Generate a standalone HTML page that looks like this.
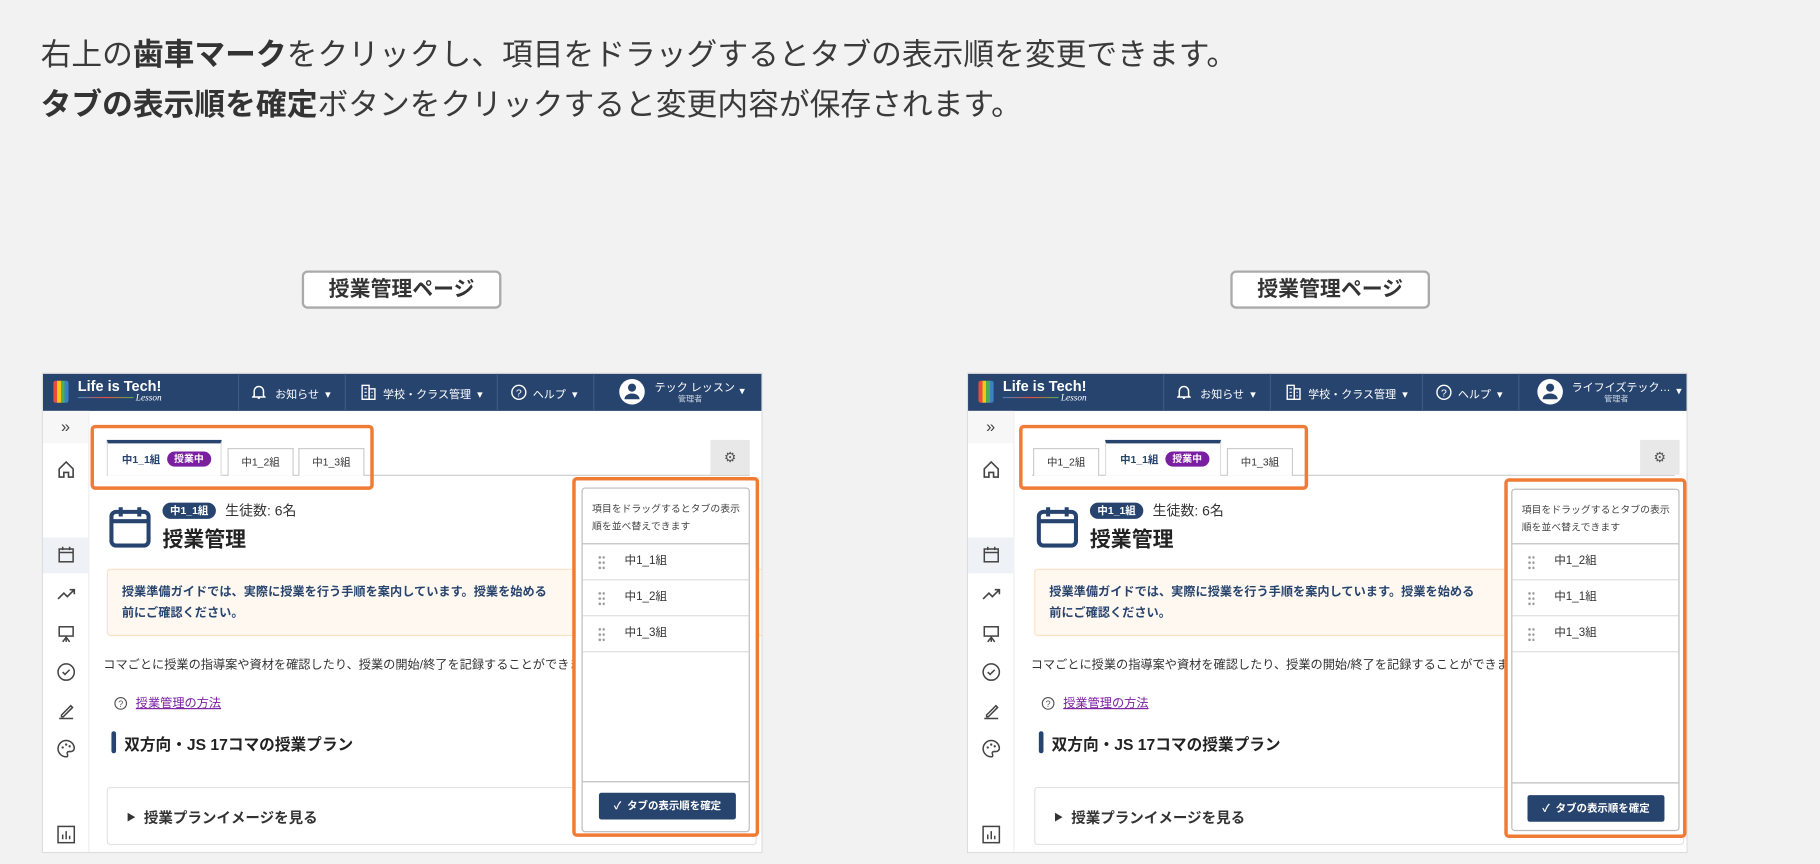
<!DOCTYPE html>
<html><head><meta charset="utf-8"><style>
*{box-sizing:border-box;margin:0;padding:0}
body{width:1820px;height:864px;overflow:hidden;background:#f2f2f2;font-family:"Liberation Sans","Noto Sans CJK JP",sans-serif;color:#333}
#w{position:absolute;left:0;top:0;width:1568px;height:744px;transform:scale(1.16071);transform-origin:0 0}
.a{position:absolute}
.intro{left:35px;font-size:26.5px;color:#3a3a3a;white-space:nowrap;line-height:32px}
.intro b{font-weight:700;color:#333}
.lbl{width:172px;height:33px;border:2px solid #aaa;border-radius:5px;background:#fff;font-size:18px;font-weight:700;text-align:center;line-height:29px;color:#333}
.fr{width:621px;height:414px;background:#fff;border:1px solid #ddd;overflow:hidden}
.hd{left:0;top:0;width:621px;height:32px;background:#27446f;color:#fff}
.hd .sep{top:0;width:1px;height:32px;background:#3d5a85}
.hd .t{font-size:9.5px;top:10px;white-space:nowrap}
.sb{left:0;top:32px;width:40px;height:382px;border-right:1px solid #eee}
.ic{left:11px;width:18px;height:18px}
.tabline{left:55px;top:87px;width:554px;height:1px;background:#ccc}
.tab{height:24px;top:64px;border:1px solid #ccc;border-bottom:none;background:#fff;font-size:9px;text-align:center;line-height:23px;color:#333}
.atab{top:57px;height:31px;border-top:3px solid #27446f;background:#fff;font-size:9px;font-weight:700;color:#27446f;line-height:28px;white-space:nowrap}
.pill{display:inline-block;background:#7b1fa2;color:#fff;border-radius:8px;font-size:8.5px;padding:0 6px;line-height:13px;margin-left:6px;vertical-align:1px}
.ob{border:3px solid #f07b35;border-radius:4px}
.row{left:0;width:143px;height:31px;border-bottom:1px solid #ddd;font-size:10px;line-height:30px;padding-left:36px;color:#333}
.dots{position:absolute;left:13px;top:9px;width:6px;height:13px;background-image:radial-gradient(circle,#999 1px,transparent 1.3px);background-size:3.5px 4.5px}
</style></head><body><div id="w">
<div class="a intro" style="top:31px">右上の<b>歯車マーク</b>をクリックし、項目をドラッグするとタブの表示順を変更できます。</div>
<div class="a intro" style="top:74px"><b>タブの表示順を確定</b>ボタンをクリックすると変更内容が保存されます。</div>
<div class="a lbl" style="left:260px;top:233px">授業管理ページ</div>
<div class="a lbl" style="left:1060px;top:233px">授業管理ページ</div>

<div class="a fr" style="left:36px;top:321px">
 <div class="a hd">
  <div class="a" style="left:9px;top:6px;width:13px;height:19px;background:linear-gradient(90deg,#e94b3c 0 25%,#f5c518 25% 50%,#4caf50 50% 75%,#3b82c4 75%);border-radius:2px"></div>
  <div class="a" style="left:30px;top:4px;font-size:12.5px;font-weight:700;white-space:nowrap">Life is Tech!</div>
  <div class="a" style="left:30px;top:20px;width:48px;height:1px;background:linear-gradient(90deg,#3b82c4,#e94b3c,#4caf50)"></div>
  <div class="a" style="left:80px;top:16px;font-size:8px;font-style:italic;font-family:'Liberation Serif',serif">Lesson</div>
  <div class="a sep" style="left:168px"></div><div class="a sep" style="left:260px"></div><div class="a sep" style="left:391px"></div><div class="a sep" style="left:474px"></div>
  <svg class="a" style="left:180px;top:9px" width="12" height="14" viewBox="0 0 12 14"><path d="M2 10V6a4 4 0 0 1 8 0v4l1 1H1z M5 12h2" fill="none" stroke="#fff" stroke-width="1.3"/></svg>
  <div class="a t" style="left:200px">お知らせ&nbsp;&nbsp;▾</div>
  <svg class="a" style="left:274px;top:9px" width="13" height="14" viewBox="0 0 13 14"><rect x="1" y="1" width="6" height="12" fill="none" stroke="#fff" stroke-width="1.2"/><rect x="7" y="4" width="5" height="9" fill="none" stroke="#fff" stroke-width="1.2"/><path d="M3 4h2M3 7h2M3 10h2M9 7h1M9 10h1" stroke="#fff"/></svg>
  <div class="a t" style="left:293px">学校・クラス管理&nbsp;&nbsp;▾</div>
  <svg class="a" style="left:403px;top:9px" width="14" height="14" viewBox="0 0 14 14"><circle cx="7" cy="7" r="6" fill="none" stroke="#fff" stroke-width="1.2"/><text x="7" y="10.5" font-size="9" fill="#fff" text-anchor="middle" font-family="Liberation Sans">?</text></svg>
  <div class="a t" style="left:422px">ヘルプ&nbsp;&nbsp;▾</div>
  <svg class="a" style="left:496px;top:4px" width="23" height="23" viewBox="0 0 23 23"><circle cx="11.5" cy="11.5" r="11" fill="#fff"/><circle cx="11.5" cy="8" r="3.5" fill="#27446f"/><path d="M5 18a6.5 5 0 0 1 13 0z" fill="#27446f"/></svg>
  <div class="a t" style="left:527px;top:4px;font-size:9.5px">テック レッスン</div>
  <div class="a t" style="left:547px;top:17px;font-size:7px;color:#cdd6e3">管理者</div>
  <div class="a t" style="left:600px">▾</div>
 </div>
 <div class="a sb">
  <div class="a" style="left:0;top:0;width:39px;height:28px;background:#f7f7f7;font-size:14px;text-align:center;line-height:26px;color:#444">»</div>
  <svg class="a ic" style="top:41px" viewBox="0 0 18 18"><path d="M3 9L9 3l6 6v7H11v-4H7v4H3z" fill="none" stroke="#444" stroke-width="1.4"/></svg>
  <div class="a" style="left:0;top:109px;width:39px;height:31px;background:#eef2f7"></div>
  <svg class="a ic" style="top:115px" viewBox="0 0 18 18"><rect x="3" y="4" width="12" height="11" fill="none" stroke="#444" stroke-width="1.3"/><path d="M3 7h12M6 2v3M12 2v3" stroke="#444" stroke-width="1.3"/></svg>
  <svg class="a ic" style="top:149px" viewBox="0 0 18 18"><path d="M2 13l5-5 3 3 6-6M12 5h4v4" fill="none" stroke="#444" stroke-width="1.4"/></svg>
  <svg class="a ic" style="top:183px" viewBox="0 0 18 18"><rect x="3" y="3" width="12" height="8" fill="none" stroke="#444" stroke-width="1.3"/><path d="M9 11v5M6 16l3-4 3 4" fill="none" stroke="#444" stroke-width="1.3"/></svg>
  <svg class="a ic" style="top:216px" viewBox="0 0 18 18"><circle cx="9" cy="9" r="7" fill="none" stroke="#444" stroke-width="1.3"/><path d="M6 9l2 2 4-4" fill="none" stroke="#444" stroke-width="1.3"/></svg>
  <svg class="a ic" style="top:249px" viewBox="0 0 18 18"><path d="M5 13l8-8 1.5 1.5-8 8H5zM3 16h12" fill="none" stroke="#444" stroke-width="1.3"/></svg>
  <svg class="a ic" style="top:282px" viewBox="0 0 18 18"><path d="M9 2a7 7 0 0 0 0 14c1.5 0 1.5-1.5 1-2.5s0-2 1.5-2H13a3 3 0 0 0 3-3A7 7 0 0 0 9 2z" fill="none" stroke="#444" stroke-width="1.3"/><circle cx="6" cy="8" r="1" fill="#444"/><circle cx="9" cy="5.5" r="1" fill="#444"/><circle cx="12" cy="7" r="1" fill="#444"/></svg>
  <svg class="a ic" style="top:356px" viewBox="0 0 18 18"><rect x="2" y="2" width="14" height="14" fill="none" stroke="#444" stroke-width="1.3"/><path d="M6 13V9M9 13V6M12 13v-3" stroke="#444" stroke-width="1.3"/></svg>
 </div>
 <div class="a tabline"></div>
 <div class="a atab" style="left:55px;width:99px;padding-left:12px;border-left:1px solid #ddd;border-right:1px solid #ddd">中1_1組<span class="pill">授業中</span></div>
 <div class="a tab" style="left:159px;width:57px">中1_2組</div>
 <div class="a tab" style="left:220px;width:57px">中1_3組</div>
 <div class="a ob" style="left:41px;top:44px;width:244px;height:56px"></div>
 <div class="a" style="left:575px;top:57px;width:34px;height:30px;background:#e8e8e8;text-align:center;line-height:30px;font-size:12px;color:#555">⚙</div>
 <svg class="a" style="left:57px;top:114px" width="36" height="36" viewBox="0 0 36 36"><rect x="2" y="5" width="32" height="29" rx="4" fill="none" stroke="#27446f" stroke-width="3.5"/><path d="M2 13h32M10 1v8M26 1v8" stroke="#27446f" stroke-width="3.5"/></svg>
 <div class="a" style="left:103px;top:111px;width:46px;height:14px;background:#27446f;color:#fff;border-radius:7px;font-size:9px;font-weight:700;text-align:center;line-height:14px">中1_1組</div>
 <div class="a" style="left:157px;top:109px;font-size:12px;color:#333">生徒数: 6名</div>
 <div class="a" style="left:103px;top:129px;font-size:18px;font-weight:700;color:#222">授業管理</div>
 <div class="a" style="left:55px;top:168px;width:570px;height:58px;background:#fff8f0;border:1.5px solid #fbe2c4;border-radius:3px"></div>
 <div class="a" style="left:68px;top:179px;font-size:10.5px;font-weight:700;color:#27446f;line-height:18px;width:376px">授業準備ガイドでは、実際に授業を行う手順を案内しています。授業を始める前にご確認ください。</div>
 <div class="a" style="left:52px;top:243px;font-size:10.5px;white-space:nowrap;color:#333">コマごとに授業の指導案や資材を確認したり、授業の開始/終了を記録することができます。</div>
 <svg class="a" style="left:61px;top:278px" width="12" height="12" viewBox="0 0 12 12"><circle cx="6" cy="6" r="5" fill="none" stroke="#555"/><text x="6" y="9" font-size="8" text-anchor="middle" fill="#555" font-family="Liberation Sans">?</text></svg>
 <div class="a" style="left:80px;top:276px;font-size:10.5px;color:#7b1fa2;text-decoration:underline">授業管理の方法</div>
 <div class="a" style="left:59px;top:308px;width:4px;height:19px;background:#27446f;border-radius:2px"></div>
 <div class="a" style="left:70px;top:308px;font-size:13.5px;font-weight:700;color:#222">双方向・JS 17コマの授業プラン</div>
 <div class="a" style="left:55px;top:356px;width:560px;height:50px;border:1px solid #e2e2e2;border-radius:3px"></div>
 <div class="a" style="left:72px;top:372px;font-size:12.5px;font-weight:700;color:#333"><span style="font-size:8px;vertical-align:2px">▶</span>&nbsp; 授業プランイメージを見る</div>
 <div class="a" style="left:456px;top:89px;width:161px;height:310px;background:#fff"></div>
 <div class="a" style="left:464px;top:98px;width:145px;height:297px;border:1px solid #bbb;border-radius:3px;background:#fff">
  <div class="a" style="left:8px;top:10px;font-size:8.5px;line-height:15px;width:132px;color:#444">項目をドラッグするとタブの表示順を並べ替えできます</div>
  <div class="a" style="left:0;top:47px;width:143px;height:1px;background:#bbb"></div>
  <div class="a row" style="top:48px"><span class="dots"></span>中1_1組</div>
  <div class="a row" style="top:79px"><span class="dots"></span>中1_2組</div>
  <div class="a row" style="top:110px"><span class="dots"></span>中1_3組</div>
  <div class="a" style="left:0;top:252px;width:143px;height:1px;background:#bbb"></div>
  <div class="a" style="left:14px;top:262px;width:118px;height:23px;background:#27446f;border-radius:2px;color:#fff;font-size:9px;font-weight:700;text-align:center;line-height:23px">✓&nbsp; タブの表示順を確定</div>
 </div>
 <div class="a ob" style="left:456px;top:89px;width:161px;height:310px"></div>
</div>

<div class="a fr" style="left:833px;top:321px">
 <div class="a hd">
  <div class="a" style="left:9px;top:6px;width:13px;height:19px;background:linear-gradient(90deg,#e94b3c 0 25%,#f5c518 25% 50%,#4caf50 50% 75%,#3b82c4 75%);border-radius:2px"></div>
  <div class="a" style="left:30px;top:4px;font-size:12.5px;font-weight:700;white-space:nowrap">Life is Tech!</div>
  <div class="a" style="left:30px;top:20px;width:48px;height:1px;background:linear-gradient(90deg,#3b82c4,#e94b3c,#4caf50)"></div>
  <div class="a" style="left:80px;top:16px;font-size:8px;font-style:italic;font-family:'Liberation Serif',serif">Lesson</div>
  <div class="a sep" style="left:168px"></div><div class="a sep" style="left:260px"></div><div class="a sep" style="left:391px"></div><div class="a sep" style="left:474px"></div>
  <svg class="a" style="left:180px;top:9px" width="12" height="14" viewBox="0 0 12 14"><path d="M2 10V6a4 4 0 0 1 8 0v4l1 1H1z M5 12h2" fill="none" stroke="#fff" stroke-width="1.3"/></svg>
  <div class="a t" style="left:200px">お知らせ&nbsp;&nbsp;▾</div>
  <svg class="a" style="left:274px;top:9px" width="13" height="14" viewBox="0 0 13 14"><rect x="1" y="1" width="6" height="12" fill="none" stroke="#fff" stroke-width="1.2"/><rect x="7" y="4" width="5" height="9" fill="none" stroke="#fff" stroke-width="1.2"/><path d="M3 4h2M3 7h2M3 10h2M9 7h1M9 10h1" stroke="#fff"/></svg>
  <div class="a t" style="left:293px">学校・クラス管理&nbsp;&nbsp;▾</div>
  <svg class="a" style="left:403px;top:9px" width="14" height="14" viewBox="0 0 14 14"><circle cx="7" cy="7" r="6" fill="none" stroke="#fff" stroke-width="1.2"/><text x="7" y="10.5" font-size="9" fill="#fff" text-anchor="middle" font-family="Liberation Sans">?</text></svg>
  <div class="a t" style="left:422px">ヘルプ&nbsp;&nbsp;▾</div>
  <svg class="a" style="left:490px;top:4px" width="23" height="23" viewBox="0 0 23 23"><circle cx="11.5" cy="11.5" r="11" fill="#fff"/><circle cx="11.5" cy="8" r="3.5" fill="#27446f"/><path d="M5 18a6.5 5 0 0 1 13 0z" fill="#27446f"/></svg>
  <div class="a t" style="left:520px;top:4px;font-size:9.5px">ライフイズテック…</div>
  <div class="a t" style="left:548px;top:17px;font-size:7px;color:#cdd6e3">管理者</div>
  <div class="a t" style="left:610px">▾</div>
 </div>
 <div class="a sb">
  <div class="a" style="left:0;top:0;width:39px;height:28px;background:#f7f7f7;font-size:14px;text-align:center;line-height:26px;color:#444">»</div>
  <svg class="a ic" style="top:41px" viewBox="0 0 18 18"><path d="M3 9L9 3l6 6v7H11v-4H7v4H3z" fill="none" stroke="#444" stroke-width="1.4"/></svg>
  <div class="a" style="left:0;top:109px;width:39px;height:31px;background:#eef2f7"></div>
  <svg class="a ic" style="top:115px" viewBox="0 0 18 18"><rect x="3" y="4" width="12" height="11" fill="none" stroke="#444" stroke-width="1.3"/><path d="M3 7h12M6 2v3M12 2v3" stroke="#444" stroke-width="1.3"/></svg>
  <svg class="a ic" style="top:149px" viewBox="0 0 18 18"><path d="M2 13l5-5 3 3 6-6M12 5h4v4" fill="none" stroke="#444" stroke-width="1.4"/></svg>
  <svg class="a ic" style="top:183px" viewBox="0 0 18 18"><rect x="3" y="3" width="12" height="8" fill="none" stroke="#444" stroke-width="1.3"/><path d="M9 11v5M6 16l3-4 3 4" fill="none" stroke="#444" stroke-width="1.3"/></svg>
  <svg class="a ic" style="top:216px" viewBox="0 0 18 18"><circle cx="9" cy="9" r="7" fill="none" stroke="#444" stroke-width="1.3"/><path d="M6 9l2 2 4-4" fill="none" stroke="#444" stroke-width="1.3"/></svg>
  <svg class="a ic" style="top:249px" viewBox="0 0 18 18"><path d="M5 13l8-8 1.5 1.5-8 8H5zM3 16h12" fill="none" stroke="#444" stroke-width="1.3"/></svg>
  <svg class="a ic" style="top:282px" viewBox="0 0 18 18"><path d="M9 2a7 7 0 0 0 0 14c1.5 0 1.5-1.5 1-2.5s0-2 1.5-2H13a3 3 0 0 0 3-3A7 7 0 0 0 9 2z" fill="none" stroke="#444" stroke-width="1.3"/><circle cx="6" cy="8" r="1" fill="#444"/><circle cx="9" cy="5.5" r="1" fill="#444"/><circle cx="12" cy="7" r="1" fill="#444"/></svg>
  <svg class="a ic" style="top:356px" viewBox="0 0 18 18"><rect x="2" y="2" width="14" height="14" fill="none" stroke="#444" stroke-width="1.3"/><path d="M6 13V9M9 13V6M12 13v-3" stroke="#444" stroke-width="1.3"/></svg>
 </div>
 <div class="a tabline"></div>
 <div class="a tab" style="left:56px;width:57px">中1_2組</div>
 <div class="a atab" style="left:118px;width:100px;padding-left:12px;border-left:1px solid #ddd;border-right:1px solid #ddd">中1_1組<span class="pill">授業中</span></div>
 <div class="a tab" style="left:223px;width:57px">中1_3組</div>
 <div class="a ob" style="left:44px;top:44px;width:249px;height:56px"></div>
 <div class="a" style="left:579px;top:57px;width:34px;height:30px;background:#e8e8e8;text-align:center;line-height:30px;font-size:12px;color:#555">⚙</div>
 <svg class="a" style="left:59px;top:114px" width="36" height="36" viewBox="0 0 36 36"><rect x="2" y="5" width="32" height="29" rx="4" fill="none" stroke="#27446f" stroke-width="3.5"/><path d="M2 13h32M10 1v8M26 1v8" stroke="#27446f" stroke-width="3.5"/></svg>
 <div class="a" style="left:105px;top:111px;width:46px;height:14px;background:#27446f;color:#fff;border-radius:7px;font-size:9px;font-weight:700;text-align:center;line-height:14px">中1_1組</div>
 <div class="a" style="left:159px;top:109px;font-size:12px;color:#333">生徒数: 6名</div>
 <div class="a" style="left:105px;top:129px;font-size:18px;font-weight:700;color:#222">授業管理</div>
 <div class="a" style="left:57px;top:168px;width:570px;height:58px;background:#fff8f0;border:1.5px solid #fbe2c4;border-radius:3px"></div>
 <div class="a" style="left:70px;top:179px;font-size:10.5px;font-weight:700;color:#27446f;line-height:18px;width:376px">授業準備ガイドでは、実際に授業を行う手順を案内しています。授業を始める前にご確認ください。</div>
 <div class="a" style="left:54px;top:243px;font-size:10.5px;white-space:nowrap;color:#333">コマごとに授業の指導案や資材を確認したり、授業の開始/終了を記録することができます。</div>
 <svg class="a" style="left:63px;top:278px" width="12" height="12" viewBox="0 0 12 12"><circle cx="6" cy="6" r="5" fill="none" stroke="#555"/><text x="6" y="9" font-size="8" text-anchor="middle" fill="#555" font-family="Liberation Sans">?</text></svg>
 <div class="a" style="left:82px;top:276px;font-size:10.5px;color:#7b1fa2;text-decoration:underline">授業管理の方法</div>
 <div class="a" style="left:61px;top:308px;width:4px;height:19px;background:#27446f;border-radius:2px"></div>
 <div class="a" style="left:72px;top:308px;font-size:13.5px;font-weight:700;color:#222">双方向・JS 17コマの授業プラン</div>
 <div class="a" style="left:57px;top:356px;width:560px;height:50px;border:1px solid #e2e2e2;border-radius:3px"></div>
 <div class="a" style="left:74px;top:372px;font-size:12.5px;font-weight:700;color:#333"><span style="font-size:8px;vertical-align:2px">▶</span>&nbsp; 授業プランイメージを見る</div>
 <div class="a" style="left:462px;top:90px;width:157px;height:310px;background:#fff"></div>
 <div class="a" style="left:468px;top:99px;width:145px;height:295px;border:1px solid #bbb;border-radius:3px;background:#fff">
  <div class="a" style="left:8px;top:10px;font-size:8.5px;line-height:15px;width:132px;color:#444">項目をドラッグするとタブの表示順を並べ替えできます</div>
  <div class="a" style="left:0;top:46px;width:143px;height:1px;background:#bbb"></div>
  <div class="a row" style="top:47px"><span class="dots"></span>中1_2組</div>
  <div class="a row" style="top:78px"><span class="dots"></span>中1_1組</div>
  <div class="a row" style="top:109px"><span class="dots"></span>中1_3組</div>
  <div class="a" style="left:0;top:252px;width:143px;height:1px;background:#bbb"></div>
  <div class="a" style="left:13px;top:263px;width:118px;height:23px;background:#27446f;border-radius:2px;color:#fff;font-size:9px;font-weight:700;text-align:center;line-height:23px">✓&nbsp; タブの表示順を確定</div>
 </div>
 <div class="a ob" style="left:462px;top:90px;width:157px;height:310px"></div>
</div>
</div></body></html>
